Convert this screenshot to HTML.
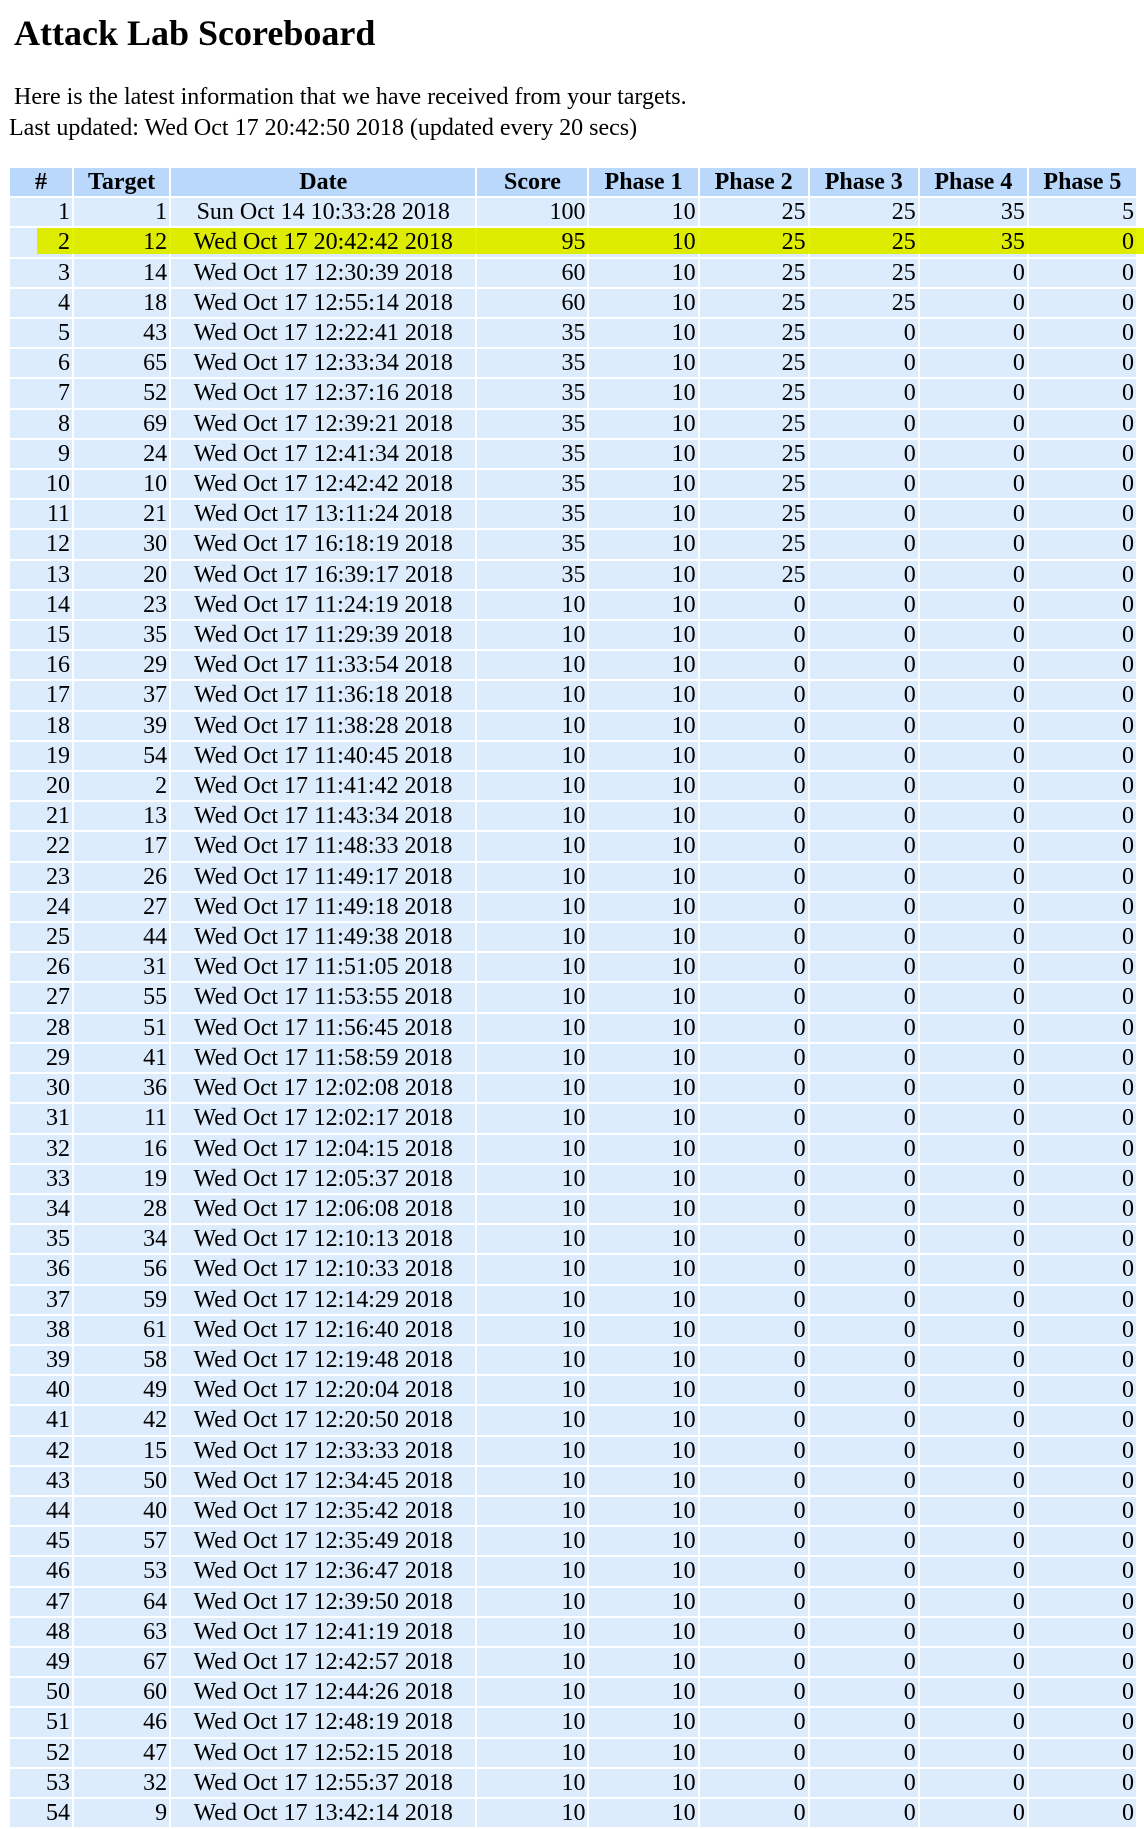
<!DOCTYPE html>
<html><head><meta charset="utf-8"><style>
body{margin:0;background:#fff;font-family:"Liberation Serif",serif;color:#000;width:1144px;height:1811px;overflow:hidden;position:relative}
h1{position:absolute;left:14px;top:12px;margin:0;font-size:36px;line-height:42px;font-weight:bold}
.p1{position:absolute;left:14px;top:83px;font-size:24px;line-height:28px;white-space:pre}
.p2{position:absolute;left:9px;top:114px;font-size:24px;line-height:28px;white-space:pre}
table{position:absolute;left:8px;top:166px;width:1130px;border-spacing:2px;table-layout:fixed;font-size:24px}
td,th{height:28.2px;padding:0 2px;line-height:28.2px;text-align:right;background:#ddecfd;white-space:nowrap;overflow:hidden}
th{background:#b9d8fb;text-align:center;font-weight:bold}
td.d{text-align:center}
.hl{position:absolute;left:37px;top:228px;width:1107px;height:26px;background:#e2f200;mix-blend-mode:darken}
</style></head><body>
<h1>Attack Lab Scoreboard</h1>
<div class="p1">Here is the latest information that we have received from your targets.</div>
<div class="p2">Last updated: Wed Oct 17 20:42:50 2018 (updated every 20 secs)</div>
<table>
<colgroup><col style="width:62px"><col style="width:95px"><col style="width:304px"><col style="width:110px"><col style="width:108px"><col style="width:108px"><col style="width:108px"><col style="width:107px"><col style="width:107px"></colgroup>
<tr><th>#</th><th>Target</th><th>Date</th><th>Score</th><th>Phase 1</th><th>Phase 2</th><th>Phase 3</th><th>Phase 4</th><th>Phase 5</th></tr>
<tr><td>1</td><td>1</td><td class="d">Sun Oct 14 10:33:28 2018</td><td>100</td><td>10</td><td>25</td><td>25</td><td>35</td><td>5</td></tr>
<tr><td>2</td><td>12</td><td class="d">Wed Oct 17 20:42:42 2018</td><td>95</td><td>10</td><td>25</td><td>25</td><td>35</td><td>0</td></tr>
<tr><td>3</td><td>14</td><td class="d">Wed Oct 17 12:30:39 2018</td><td>60</td><td>10</td><td>25</td><td>25</td><td>0</td><td>0</td></tr>
<tr><td>4</td><td>18</td><td class="d">Wed Oct 17 12:55:14 2018</td><td>60</td><td>10</td><td>25</td><td>25</td><td>0</td><td>0</td></tr>
<tr><td>5</td><td>43</td><td class="d">Wed Oct 17 12:22:41 2018</td><td>35</td><td>10</td><td>25</td><td>0</td><td>0</td><td>0</td></tr>
<tr><td>6</td><td>65</td><td class="d">Wed Oct 17 12:33:34 2018</td><td>35</td><td>10</td><td>25</td><td>0</td><td>0</td><td>0</td></tr>
<tr><td>7</td><td>52</td><td class="d">Wed Oct 17 12:37:16 2018</td><td>35</td><td>10</td><td>25</td><td>0</td><td>0</td><td>0</td></tr>
<tr><td>8</td><td>69</td><td class="d">Wed Oct 17 12:39:21 2018</td><td>35</td><td>10</td><td>25</td><td>0</td><td>0</td><td>0</td></tr>
<tr><td>9</td><td>24</td><td class="d">Wed Oct 17 12:41:34 2018</td><td>35</td><td>10</td><td>25</td><td>0</td><td>0</td><td>0</td></tr>
<tr><td>10</td><td>10</td><td class="d">Wed Oct 17 12:42:42 2018</td><td>35</td><td>10</td><td>25</td><td>0</td><td>0</td><td>0</td></tr>
<tr><td>11</td><td>21</td><td class="d">Wed Oct 17 13:11:24 2018</td><td>35</td><td>10</td><td>25</td><td>0</td><td>0</td><td>0</td></tr>
<tr><td>12</td><td>30</td><td class="d">Wed Oct 17 16:18:19 2018</td><td>35</td><td>10</td><td>25</td><td>0</td><td>0</td><td>0</td></tr>
<tr><td>13</td><td>20</td><td class="d">Wed Oct 17 16:39:17 2018</td><td>35</td><td>10</td><td>25</td><td>0</td><td>0</td><td>0</td></tr>
<tr><td>14</td><td>23</td><td class="d">Wed Oct 17 11:24:19 2018</td><td>10</td><td>10</td><td>0</td><td>0</td><td>0</td><td>0</td></tr>
<tr><td>15</td><td>35</td><td class="d">Wed Oct 17 11:29:39 2018</td><td>10</td><td>10</td><td>0</td><td>0</td><td>0</td><td>0</td></tr>
<tr><td>16</td><td>29</td><td class="d">Wed Oct 17 11:33:54 2018</td><td>10</td><td>10</td><td>0</td><td>0</td><td>0</td><td>0</td></tr>
<tr><td>17</td><td>37</td><td class="d">Wed Oct 17 11:36:18 2018</td><td>10</td><td>10</td><td>0</td><td>0</td><td>0</td><td>0</td></tr>
<tr><td>18</td><td>39</td><td class="d">Wed Oct 17 11:38:28 2018</td><td>10</td><td>10</td><td>0</td><td>0</td><td>0</td><td>0</td></tr>
<tr><td>19</td><td>54</td><td class="d">Wed Oct 17 11:40:45 2018</td><td>10</td><td>10</td><td>0</td><td>0</td><td>0</td><td>0</td></tr>
<tr><td>20</td><td>2</td><td class="d">Wed Oct 17 11:41:42 2018</td><td>10</td><td>10</td><td>0</td><td>0</td><td>0</td><td>0</td></tr>
<tr><td>21</td><td>13</td><td class="d">Wed Oct 17 11:43:34 2018</td><td>10</td><td>10</td><td>0</td><td>0</td><td>0</td><td>0</td></tr>
<tr><td>22</td><td>17</td><td class="d">Wed Oct 17 11:48:33 2018</td><td>10</td><td>10</td><td>0</td><td>0</td><td>0</td><td>0</td></tr>
<tr><td>23</td><td>26</td><td class="d">Wed Oct 17 11:49:17 2018</td><td>10</td><td>10</td><td>0</td><td>0</td><td>0</td><td>0</td></tr>
<tr><td>24</td><td>27</td><td class="d">Wed Oct 17 11:49:18 2018</td><td>10</td><td>10</td><td>0</td><td>0</td><td>0</td><td>0</td></tr>
<tr><td>25</td><td>44</td><td class="d">Wed Oct 17 11:49:38 2018</td><td>10</td><td>10</td><td>0</td><td>0</td><td>0</td><td>0</td></tr>
<tr><td>26</td><td>31</td><td class="d">Wed Oct 17 11:51:05 2018</td><td>10</td><td>10</td><td>0</td><td>0</td><td>0</td><td>0</td></tr>
<tr><td>27</td><td>55</td><td class="d">Wed Oct 17 11:53:55 2018</td><td>10</td><td>10</td><td>0</td><td>0</td><td>0</td><td>0</td></tr>
<tr><td>28</td><td>51</td><td class="d">Wed Oct 17 11:56:45 2018</td><td>10</td><td>10</td><td>0</td><td>0</td><td>0</td><td>0</td></tr>
<tr><td>29</td><td>41</td><td class="d">Wed Oct 17 11:58:59 2018</td><td>10</td><td>10</td><td>0</td><td>0</td><td>0</td><td>0</td></tr>
<tr><td>30</td><td>36</td><td class="d">Wed Oct 17 12:02:08 2018</td><td>10</td><td>10</td><td>0</td><td>0</td><td>0</td><td>0</td></tr>
<tr><td>31</td><td>11</td><td class="d">Wed Oct 17 12:02:17 2018</td><td>10</td><td>10</td><td>0</td><td>0</td><td>0</td><td>0</td></tr>
<tr><td>32</td><td>16</td><td class="d">Wed Oct 17 12:04:15 2018</td><td>10</td><td>10</td><td>0</td><td>0</td><td>0</td><td>0</td></tr>
<tr><td>33</td><td>19</td><td class="d">Wed Oct 17 12:05:37 2018</td><td>10</td><td>10</td><td>0</td><td>0</td><td>0</td><td>0</td></tr>
<tr><td>34</td><td>28</td><td class="d">Wed Oct 17 12:06:08 2018</td><td>10</td><td>10</td><td>0</td><td>0</td><td>0</td><td>0</td></tr>
<tr><td>35</td><td>34</td><td class="d">Wed Oct 17 12:10:13 2018</td><td>10</td><td>10</td><td>0</td><td>0</td><td>0</td><td>0</td></tr>
<tr><td>36</td><td>56</td><td class="d">Wed Oct 17 12:10:33 2018</td><td>10</td><td>10</td><td>0</td><td>0</td><td>0</td><td>0</td></tr>
<tr><td>37</td><td>59</td><td class="d">Wed Oct 17 12:14:29 2018</td><td>10</td><td>10</td><td>0</td><td>0</td><td>0</td><td>0</td></tr>
<tr><td>38</td><td>61</td><td class="d">Wed Oct 17 12:16:40 2018</td><td>10</td><td>10</td><td>0</td><td>0</td><td>0</td><td>0</td></tr>
<tr><td>39</td><td>58</td><td class="d">Wed Oct 17 12:19:48 2018</td><td>10</td><td>10</td><td>0</td><td>0</td><td>0</td><td>0</td></tr>
<tr><td>40</td><td>49</td><td class="d">Wed Oct 17 12:20:04 2018</td><td>10</td><td>10</td><td>0</td><td>0</td><td>0</td><td>0</td></tr>
<tr><td>41</td><td>42</td><td class="d">Wed Oct 17 12:20:50 2018</td><td>10</td><td>10</td><td>0</td><td>0</td><td>0</td><td>0</td></tr>
<tr><td>42</td><td>15</td><td class="d">Wed Oct 17 12:33:33 2018</td><td>10</td><td>10</td><td>0</td><td>0</td><td>0</td><td>0</td></tr>
<tr><td>43</td><td>50</td><td class="d">Wed Oct 17 12:34:45 2018</td><td>10</td><td>10</td><td>0</td><td>0</td><td>0</td><td>0</td></tr>
<tr><td>44</td><td>40</td><td class="d">Wed Oct 17 12:35:42 2018</td><td>10</td><td>10</td><td>0</td><td>0</td><td>0</td><td>0</td></tr>
<tr><td>45</td><td>57</td><td class="d">Wed Oct 17 12:35:49 2018</td><td>10</td><td>10</td><td>0</td><td>0</td><td>0</td><td>0</td></tr>
<tr><td>46</td><td>53</td><td class="d">Wed Oct 17 12:36:47 2018</td><td>10</td><td>10</td><td>0</td><td>0</td><td>0</td><td>0</td></tr>
<tr><td>47</td><td>64</td><td class="d">Wed Oct 17 12:39:50 2018</td><td>10</td><td>10</td><td>0</td><td>0</td><td>0</td><td>0</td></tr>
<tr><td>48</td><td>63</td><td class="d">Wed Oct 17 12:41:19 2018</td><td>10</td><td>10</td><td>0</td><td>0</td><td>0</td><td>0</td></tr>
<tr><td>49</td><td>67</td><td class="d">Wed Oct 17 12:42:57 2018</td><td>10</td><td>10</td><td>0</td><td>0</td><td>0</td><td>0</td></tr>
<tr><td>50</td><td>60</td><td class="d">Wed Oct 17 12:44:26 2018</td><td>10</td><td>10</td><td>0</td><td>0</td><td>0</td><td>0</td></tr>
<tr><td>51</td><td>46</td><td class="d">Wed Oct 17 12:48:19 2018</td><td>10</td><td>10</td><td>0</td><td>0</td><td>0</td><td>0</td></tr>
<tr><td>52</td><td>47</td><td class="d">Wed Oct 17 12:52:15 2018</td><td>10</td><td>10</td><td>0</td><td>0</td><td>0</td><td>0</td></tr>
<tr><td>53</td><td>32</td><td class="d">Wed Oct 17 12:55:37 2018</td><td>10</td><td>10</td><td>0</td><td>0</td><td>0</td><td>0</td></tr>
<tr><td>54</td><td>9</td><td class="d">Wed Oct 17 13:42:14 2018</td><td>10</td><td>10</td><td>0</td><td>0</td><td>0</td><td>0</td></tr>
</table>
<div class="hl"></div>
</body></html>
